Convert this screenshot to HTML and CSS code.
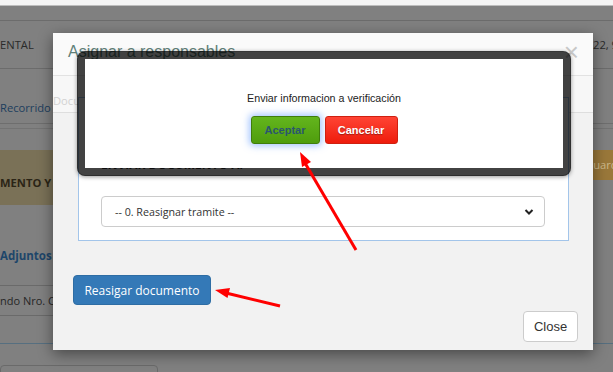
FILE: index.html
```html
<!DOCTYPE html>
<html lang="es">
<head>
<meta charset="utf-8">
<title>Asignar a responsables</title>
<link rel="stylesheet" href="styles.css">
</head>
<body>
<div class="page">
  <div class="topstrip"></div>
  <div class="row r1"></div>
  <div class="row r2"><span class="dark">ENTAL</span><span class="dark date">2022, 9</span></div>
  <div class="row r3"><span class="link">Recorrido</span></div>
  <div class="sep"></div>
  <div class="row r4"><div class="band">MENTO Y</div><div class="guard">Guardar</div></div>
  <div class="adj">Adjuntos</div>
  <div class="inputbox">ndo Nro. Ci</div>
  <div class="bline"></div>
  <div class="box2"></div>
</div>

<div class="modal">
  <div class="modal-header"><h4 class="modal-title">Asignar a responsables</h4><span class="close-x">×</span></div>
  <div class="tabs"><span class="tab">Documentos</span></div>
  <div class="fieldset">
    <div class="legend">ENVIAR DOCUMENTO A:</div>
    <div class="select"><span>-- 0. Reasignar tramite --</span>
      <svg class="chev" width="10" height="8" viewBox="0 0 10 8"><path d="M1.5 2 L5 5.5 L8.5 2" fill="none" stroke="#222" stroke-width="2"/></svg>
    </div>
  </div>
  <button class="btn-primary">Reasigar documento</button>
  <div class="modal-footer"><button class="btn-close">Close</button></div>
</div>

<div class="alert">
  <p class="alert-text">Enviar informacion a verificación</p>
  <div class="alert-actions">
    <button class="btn-ok">Aceptar</button>
    <button class="btn-cancel">Cancelar</button>
  </div>
</div>

<svg class="arrows" width="613" height="372" viewBox="0 0 613 372">
  <line x1="356" y1="250" x2="305" y2="163" stroke="#ff0000" stroke-width="3"/>
  <polygon points="300,152 311,162 302,167" fill="#ff0000"/>
  <line x1="280" y1="306" x2="226" y2="293" stroke="#ff0000" stroke-width="3"/>
  <polygon points="215,290 230,288 227.5,298" fill="#ff0000"/>
</svg>
</body>
</html>
```

FILE: styles.css
```css
* { box-sizing: border-box; }
html, body { margin: 0; padding: 0; }
body {
  width: 613px;
  height: 372px;
  overflow: hidden;
  background: #808080;
  font-family: "Open Sans", "Noto Sans", sans-serif;
  position: relative;
}
.page { width: 613px; }
.topstrip { height: 6px; background: #f4f4f4; border-bottom: 1px solid #bdbdbd; }
.row { display: flex; }
.r1 { height: 15px; border-bottom: 1px solid #6c6c6c; }
.r2 {
  height: 48px;
  border-bottom: 1px solid #6c6c6c;
  align-items: center;
  font-size: 11.2px;
}
.dark { color: #2a2a2a; white-space: nowrap; }
.date { margin-left: auto; margin-right: -5px; }
.r3 {
  height: 55px;
  align-items: flex-end;
  padding-bottom: 8px;
  border-bottom: 1px solid #6e6e6e;
  font-size: 11.2px;
}
.link { color: #1d3e5e; }
.sep { height: 5px; border-bottom: 1px solid #737373; }
.r4 { margin-top: 21px; height: 55px; align-items: flex-start; }
.band {
  width: 53px; height: 55px;
  background: #7a7157;
  font-weight: 700; font-size: 11.2px; color: #2b2516;
  padding-top: 25px; white-space: nowrap;
}
.guard {
  margin-left: auto; width: 33px; height: 30px;
  background: #9a783a; color: #cdb98c; font-size: 11.2px;
  padding: 7px 0 0 5px; white-space: nowrap;
}
.adj { margin-top: 43px; font-weight: 700; font-size: 11.5px; color: #1e466a; height: 19px; }
.inputbox {
  margin-top: 18px; width: 56px; height: 31px;
  border: 1px solid #6a6a6a; border-left: none;
  font-size: 11px; color: #262626; padding-top: 7px;
  white-space: nowrap;
}
.bline { margin-top: 27px; height: 1px; background: #566f80; }
.box2 { margin-top: 21px; width: 158px; height: 20px; border: 1px solid #6a6a6a; border-radius: 4px; }

.modal {
  position: absolute; left: 53px; top: 33px;
  width: 540px; height: 317px;
  background: #f2f2f2;
  box-shadow: 0 4px 14px rgba(0,0,0,.45);
  display: flex; flex-direction: column;
}
.modal-header {
  height: 43px; background: #fafafa; border-bottom: 1px solid #e2e2e2;
  display: flex; align-items: center; justify-content: space-between;
  padding: 0 14px 4px 15px;
}
.modal-title {
  margin: 0; font-weight: 400; font-size: 16px; color: #5f8078;
  font-family: "Liberation Sans", Arial, sans-serif;
}
.close-x { font-size: 26px; color: #c8c8c8; line-height: 1; font-family: "Liberation Sans", Arial, sans-serif; }
.tabs {
  height: 37px; background: #f7f7f7; border-bottom: 1px solid #dedede;
  display: flex; align-items: flex-end; padding: 0 0 4px 0;
}
.tab { font-size: 11.2px; color: #d2d2d2; }
.fieldset {
  margin: -16px 24px 0 25px; height: 144px;
  border: 1px solid #a3c5ea; background: #fff;
  padding: 57px 23px 0 22px;
}
.legend { font-weight: 700; font-size: 12px; color: #333; height: 41px; padding-top: 1px; }
.select {
  height: 31px; border: 1px solid #ccc; border-radius: 4px; background: #fff;
  display: flex; align-items: center; justify-content: space-between;
  padding: 0 10px 0 13px; font-size: 10.7px; color: #333;
}
.chev { display: block; }
.btn-primary {
  align-self: flex-start;
  margin: 34px 0 0 20px; width: 138px; height: 30px;
  background: #3479b7; border: 1px solid #2e6da4; border-radius: 4px;
  color: #fff; font-family: inherit; font-size: 12px; padding: 0;
}
.modal-footer { display: flex; justify-content: flex-end; padding: 6px 15px 0 0; }
.btn-close {
  width: 55px; height: 31px; background: #fff; border: 1px solid #ccc; border-radius: 4px;
  font-family: "Liberation Sans", Arial, sans-serif; font-size: 13px; color: #333; padding: 0;
}

.alert {
  position: absolute; left: 77px; top: 51px;
  width: 494px; height: 125px;
  background: #fff;
  background-clip: padding-box;
  border: 8px solid rgba(0,0,0,.74); border-radius: 8px;
  box-shadow: 0 1px 4px rgba(0,0,0,.4);
  text-align: center;
  font-family: "Liberation Sans", Arial, sans-serif;
}
.alert-text { margin: 32px 0 0; font-size: 10.7px; line-height: 14px; color: #222; }
.alert-actions { margin-top: 11px; display: flex; justify-content: center; gap: 5px; }
.btn-ok, .btn-cancel {
  height: 28px; border-radius: 3px; padding: 0;
  font-family: "Liberation Sans", Arial, sans-serif; font-weight: 700; font-size: 11px;
}
.btn-ok {
  width: 69px;
  background: linear-gradient(#63b51d, #4f9d0d);
  border: 1px solid #3f7d0c; color: #2a5670;
  box-shadow: 0 0 7px 2px rgba(90,150,255,.55);
}
.btn-cancel {
  width: 73px;
  background: linear-gradient(#ff4434, #ee1c0c);
  border: 1px solid #cf2010; color: #fff;
  text-shadow: 0 1px 1px rgba(0,0,0,.35);
}
.arrows { position: absolute; left: 0; top: 0; pointer-events: none; }
```
